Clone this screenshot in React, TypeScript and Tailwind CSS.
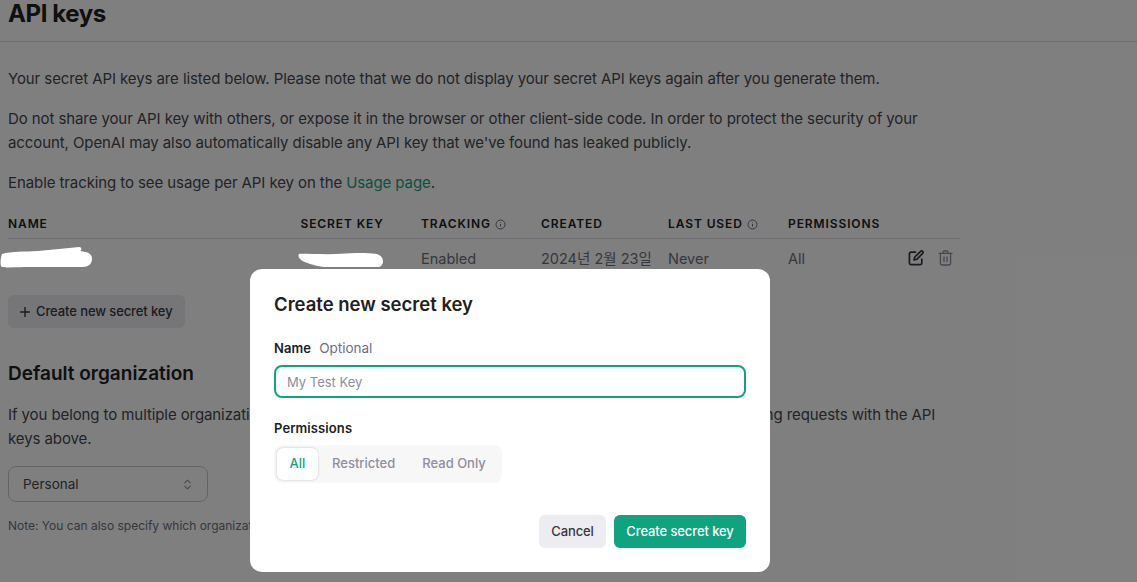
import React from "react";

const font = { fontFamily: 'Inter, "Noto Sans CJK KR", sans-serif' };

function Info() {
  return (
    <svg width="11" height="11" viewBox="0 0 11 11" fill="none" stroke="#6e6e80" strokeWidth="1">
      <circle cx="5.5" cy="5.5" r="4.5" />
      <path d="M5.5 5v2.6M5.5 3.2v.6" />
    </svg>
  );
}

function Edit() {
  return (
    <svg width="16" height="16" viewBox="0 0 16 16" fill="none" stroke="#353740" strokeWidth="1.7" strokeLinecap="round" strokeLinejoin="round">
      <path d="M7.5 2.2H3a1.6 1.6 0 0 0-1.6 1.6V13A1.6 1.6 0 0 0 3 14.6h9.2a1.6 1.6 0 0 0 1.6-1.6V9" />
      <path d="M12.6 1.4a1.4 1.4 0 0 1 2 2L9 9.2l-3 .8.8-3z" />
    </svg>
  );
}

function Trash() {
  return (
    <svg width="15" height="16" viewBox="0 0 15 16" fill="none" stroke="#8e8ea0" strokeWidth="1.3" strokeLinecap="round" strokeLinejoin="round">
      <path d="M1 3.4h13M5 3.2V2.2A1.2 1.2 0 0 1 6.2 1h2.6A1.2 1.2 0 0 1 10 2.2v1" />
      <path d="M2.4 3.6v9.6A1.8 1.8 0 0 0 4.2 15h6.6a1.8 1.8 0 0 0 1.8-1.8V3.6" />
      <path d="M6 7v4.6M9 7v4.6" />
    </svg>
  );
}

function Th({ children }: { children: React.ReactNode }) {
  return (
    <div className="flex items-center gap-[4px] text-[12px] leading-[16px] font-semibold tracking-[0.9px] text-[#202123]">
      {children}
    </div>
  );
}

export default function App() {
  return (
    <div style={font} className="relative h-[582px] w-[1137px] overflow-hidden bg-white text-[#46474f]">
      <header className="flex h-[42px] items-start border-b border-[#d9d9e3] px-2">
        <h1 className="-mt-[2px] text-[24px] leading-[32px] font-bold tracking-[-0.4px] text-[#202123]">API keys</h1>
      </header>

      <main className="w-[960px] pl-2">
        <p className="mt-[25px] text-[15px] leading-6 tracking-[-0.09px]">
          Your secret API keys are listed below. Please note that we do not display your secret API keys again after you generate them.
        </p>
        <p className="mt-4 text-[15px] leading-6 tracking-[-0.09px]">
          Do not share your API key with others, or expose it in the browser or other client-side code. In order to protect the security of your account, OpenAI may also automatically disable any API key that we've found has leaked publicly.
        </p>
        <p className="mt-4 text-[15px] leading-6 tracking-[-0.09px]">
          Enable tracking to see usage per API key on the <a className="text-[#10a37f]">Usage page</a>.
        </p>

        <div className="mt-[14px] grid h-[30px] grid-cols-[292.5px_120.5px_120px_127px_120px_172px] border-b border-[#d9d9e3] pt-[1px]">
          <Th>NAME</Th>
          <Th>SECRET KEY</Th>
          <Th>TRACKING <Info /></Th>
          <Th>CREATED</Th>
          <Th>LAST USED <Info /></Th>
          <Th>PERMISSIONS</Th>
        </div>
        <div className="grid h-[40px] grid-cols-[292.5px_120.5px_120px_127px_120px_120px_52px] items-center text-[14.5px] text-[#6e6e80]">
          <div />
          <div />
          <div>Enabled</div>
          <div>2024년 2월 23일</div>
          <div>Never</div>
          <div>All</div>
          <div className="-mt-[2px] flex items-center gap-[14px]">
            <Edit />
            <Trash />
          </div>
        </div>

        <button className="mt-[16px] flex h-[33px] w-[177px] items-center gap-[5px] rounded-[6px] bg-[#ececf1] pl-[11px] text-[13px] font-medium tracking-[-0.1px] text-[#353740]">
          <svg width="12" height="12" viewBox="0 0 12 12" stroke="#353740" strokeWidth="1.4"><path d="M6 1v10M1 6h10" /></svg>
          Create new secret key
        </button>

        <h2 className="mt-[32px] text-[19px] leading-[28px] font-semibold text-[#202123]">Default organization</h2>
        <p className="mt-[15px] text-[15px] leading-6 tracking-[-0.09px]">
          If you belong to multiple organizations, this setting controls which organization is used by default when making requests with the API keys above.
        </p>
        <div className="mt-[15px] flex h-[36px] w-[200px] items-center justify-between rounded-[8px] border border-[#c5c5d2] pt-[1px] pr-[16px] pl-[14px] text-[13.5px] text-[#46474f]">
          Personal
          <svg width="7" height="11" viewBox="0 0 9 14" fill="none" stroke="#8e8ea0" strokeWidth="1.4" strokeLinecap="round" strokeLinejoin="round">
            <path d="M1 5l3.5-3.5L8 5M1 9l3.5 3.5L8 9" />
          </svg>
        </div>
        <p className="mt-[16px] text-[12px] leading-4 text-[#6e6e80]">
          Note: You can also specify which organization to use for each API request by including it in the header.
        </p>
      </main>

      <div className="absolute inset-0 bg-black/50" />

      <svg className="absolute top-[246px] left-0" width="96" height="24" viewBox="0 0 96 24" fill="white">
        <path d="M2 8C12 5 24 6 38 5c14-1 28-3 41-4 3 0 3 3 1 4 5 1 12 1 12 8 0 5-4 8-9 8-20 0-38 0-52 0-12 0-24 1-29 0C0 20 0 14 2 8z" />
      </svg>
      <svg className="absolute top-[252px] left-[297px]" width="88" height="16" viewBox="0 0 88 18" preserveAspectRatio="none" fill="white">
        <path d="M2 2c14 0 30 1 42 0 12-1 28-1 34 0 5 1 8 4 8 8 0 4-2 7-6 7-14 0-34 0-46 0-10 0-18-2-24-5C4 10 0 6 2 2z" />
      </svg>

      <div className="absolute top-[269px] left-[250px] flex h-[303px] w-[520px] flex-col rounded-[12px] bg-white px-6 pt-[23px]">
        <h3 className="text-[18.5px] leading-[24px] font-semibold text-[#202123]">Create new secret key</h3>
        <div className="mt-[22px] flex items-center gap-2 text-[13px] leading-[20px] tracking-[0.1px]">
          <span className="font-semibold text-[#202123]">Name</span>
          <span className="text-[13.5px] tracking-normal text-[#6e6e80]">Optional</span>
        </div>
        <input
          placeholder="My Test Key"
          readOnly
          className="mt-[7px] h-[33px] w-full rounded-[8px] border-2 border-[#10a37f] px-[11px] text-[13px] outline-none placeholder:text-[#8e8ea0]"
        />
        <div className="mt-[20px] text-[13px] leading-[20px] font-semibold tracking-[0.1px] text-[#202123]">Permissions</div>
        <div className="mt-[7px] flex h-[38px] w-[228px] items-center rounded-[8px] bg-[#f7f7f8] pl-[3px] text-[13px] font-medium text-[#8e8ea0]">
          <span className="flex h-[32px] w-[41px] items-center justify-center rounded-[6px] bg-white text-[#10a37f] shadow-[0_0_2px_rgba(0,0,0,0.25)]">All</span>
          <span className="ml-[14px]">Restricted</span>
          <span className="ml-[27px]">Read Only</span>
        </div>
        <div className="mt-[32px] flex justify-end gap-2 text-[13px] font-medium tracking-[-0.1px]">
          <button className="h-[33px] w-[67px] rounded-[6px] bg-[#ececf1] pt-[1px] text-[#353740]">Cancel</button>
          <button className="h-[33px] w-[132px] rounded-[6px] bg-[#10a37f] pt-[1px] text-white">Create secret key</button>
        </div>
      </div>
    </div>
  );
}
